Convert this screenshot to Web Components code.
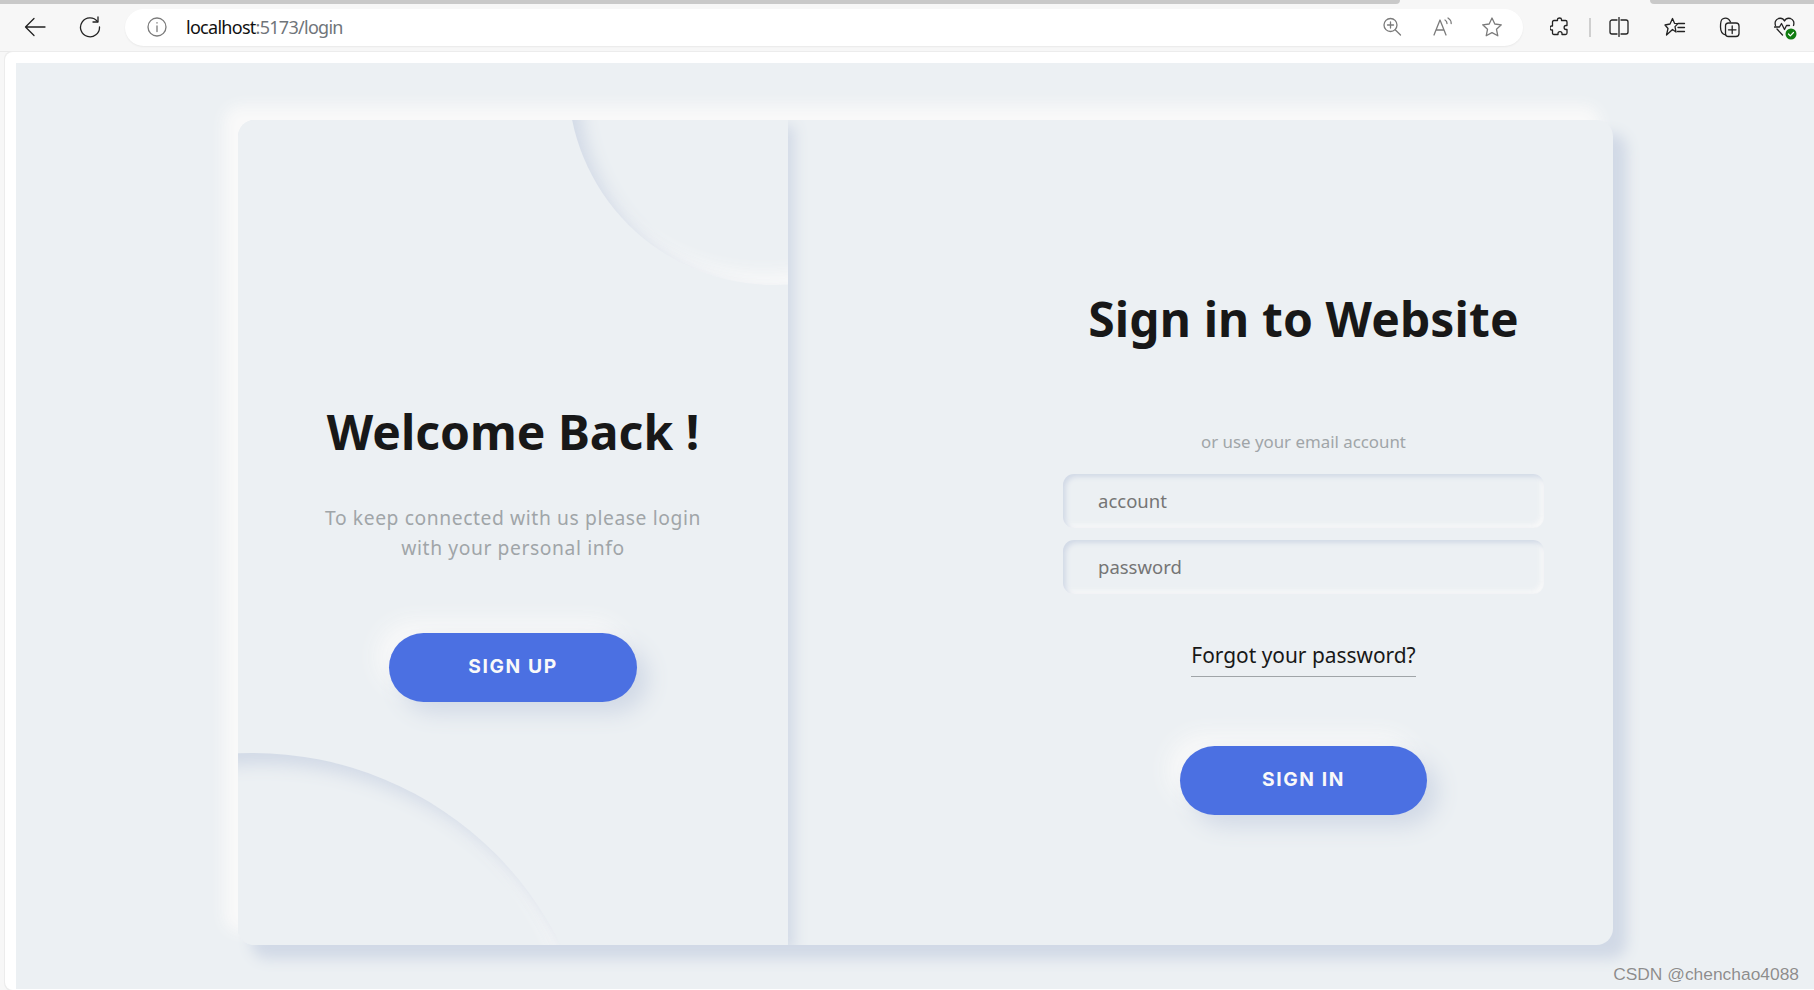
<!DOCTYPE html>
<html>
<head>
<meta charset="utf-8">
<title>login</title>
<style>
  html, body { margin: 0; height: 100%; background: #f7f7f7; overflow: hidden; }
  body { display: flex; flex-direction: column; font-family: "Noto Sans", "Open Sans", sans-serif; }
</style>
</head>
<body>
<browser-bar url-host="localhost" url-rest=":5173/login"></browser-bar>
<page-frame>
  <login-card>
    <welcome-panel slot="left"
      heading="Welcome Back !"
      button="SIGN UP">To keep connected with us please login<br>with your personal info</welcome-panel>
    <sign-form slot="right"></sign-form>
  </login-card>
</page-frame>

<script>
class BrowserBar extends HTMLElement {
  constructor() {
    super()
    const shadow = this.attachShadow({ mode: 'open' })
    shadow.innerHTML = `
    <style>
      :host { display: block; flex: none; background: #f7f7f7; }
      .tabs { display: flex; height: 4px; }
      .tabs i { background: #c9c9c9; }
      .tabs .a { width: 1400px; border-radius: 0 0 6px 0; }
      .tabs .gap { width: 250px; background: #f7f7f7; }
      .tabs .b { flex: 1; border-radius: 0 0 0 6px; }
      .bar { display: flex; align-items: center; height: 48px; box-sizing: border-box; border-bottom: 1px solid #e9e9e9; padding-bottom: 1px; }
      .nav { width: 125px; flex: none; display: flex; align-items: center; }
      .nav svg:first-child { margin-left: 24px; }
      .nav svg:last-child { margin-left: 33px; }
      .pill { flex: none; width: 1398px; height: 37px; background: #fff; border-radius: 19px; display: flex; align-items: center; box-shadow: 0 1px 2px #0000000f; }
      .pill .info { margin-left: 22px; }
      .url { margin-left: 19px; font: 18px/1 "Noto Sans", sans-serif; letter-spacing: -0.72px; color: #111; white-space: nowrap; }
      .url span { color: #70757a; }
      .pill .right { margin-left: auto; display: flex; align-items: center; }
      .pill .right svg { display: block; }
      .tools { display: flex; align-items: center; }
      svg { display: block; fill: none; stroke: #222; stroke-width: 1.3; stroke-linecap: round; stroke-linejoin: round; }
      .grey { stroke: #7b7b7b; }
    </style>
    <div class="tabs"><i class="a"></i><i class="gap"></i><i class="b"></i></div>
    <div class="bar">
      <div class="nav">
        <svg width="22" height="20" viewBox="0 0 22 20"><path d="M1.500 10H21M10 1.500 1.500 10l8.500 8.500"/></svg>
        <svg width="22" height="22" viewBox="0 0 22 22"><path d="M18.500 5.500A9.500 9.500 0 1 0 20.500 11"/><path d="M19 1v5h-5"/></svg>
      </div>
      <div class="pill">
        <svg class="info grey" width="20" height="20" viewBox="0 0 20 20"><circle cx="10" cy="10" r="9"/><path d="M10 9v5.500M10 5.600v.4"/></svg>
        <div class="url" part="url"></div>
        <div class="right">
          <svg class="grey" style="margin-right:31px" width="20" height="20" viewBox="0 0 20 20"><circle cx="8.500" cy="8" r="6.500"/><path d="M13.200 12.700 18.500 18M8.500 5v6M5.500 8h6"/></svg>
          <svg class="grey" style="margin-right:28px" width="20" height="20" viewBox="0 0 20 20"><path d="M1 18 7 3l6 15M3 13h8M12 3c1.500.8 2 2 2 3.500M15 1c2.200 1.300 3.200 3 3.200 5.500"/></svg>
          <svg class="grey" style="margin-right:20px" width="22" height="22" viewBox="0 0 22 22"><path d="m11 2 2.800 6 6.500.8-4.800 4.500 1.300 6.500L11 16.600 5.200 19.800l1.300-6.500L1.700 8.800 8.200 8z"/></svg>
        </div>
      </div>
      <div class="tools">
        <svg style="margin-left:27px" width="20" height="20" viewBox="0 0 20 20"><path d="M7.500 2.500c0-2 4-2 4 0v1h4c1 0 1.500.5 1.500 1.500v3.500h-1c-2.500 0-2.500 4 0 4h1V16c0 1-.5 1.500-1.500 1.500h-3.500v-1c0-2.500-4-2.500-4 0v1H4c-1 0-1.500-.5-1.500-1.500v-3h-1c-2 0-2-4 0-4h1V5c0-1 .5-1.500 1.500-1.500h3.500z"/></svg>
        <i style="width:2px;height:19px;background:#cfcfcf;margin-left:19px"></i>
        <svg style="margin-left:18px" width="20" height="20" viewBox="0 0 20 20"><path d="M10 .5v19M8 3H3C2 3 1 4 1 5v10c0 1 1 2 2 2h5M12 3h5c1 0 2 1 2 2v10c0 1-1 2-2 2h-5"/></svg>
        <svg style="margin-left:35px" width="22" height="20" viewBox="0 0 22 20"><path d="m8.500 1.500 2 4.800 3.500.3-3 3 1 5.400-3.500-2.500L2.500 18 4 11.500 1 8l5-1zM14 6.500h6.500M14 10.500h6.500M13.500 14.500h7"/></svg>
        <svg style="margin-left:33px" width="21" height="21" viewBox="0 0 21 21"><path d="M6.500 18C3 17 1.500 14 1.500 10 1.500 7 1.500 3 3.500 2c3-1.500 6-1 8 3"/><rect x="6.500" y="6" width="13.500" height="13.500" rx="3"/><path d="M13.200 9v7.500M9.500 12.800H17"/></svg>
        <div style="position:relative;margin-left:34px">
          <svg width="21" height="20" viewBox="0 0 21 20"><path d="M10.500 4C9 1 6.500 1 4.500 1.500 1.500 2.500.5 5.500 1.500 8.500M10.500 4c1.500-3 4-3 6-2.500 3 1 4 4 3 7M.5 10h5l2-3.500 3 6 2-4h3M3 12l5.500 6"/></svg>
          <svg style="position:absolute;right:-2px;bottom:-3px;stroke:#fff;stroke-width:1.200" width="12" height="12" viewBox="0 0 12 12"><circle cx="6" cy="6" r="5.500" fill="#107c10" stroke="none"/><path d="m3.500 6 1.800 1.800 3.200-3.300"/></svg>
        </div>
      </div>
    </div>`
    shadow.querySelector('.url').innerHTML = `${this.getAttribute('url-host')}<span>${this.getAttribute('url-rest')}</span>`
  }
}

class PageFrame extends HTMLElement {
  constructor() {
    super()
    const shadow = this.attachShadow({ mode: 'open' })
    shadow.innerHTML = `
    <style>
      :host { display: block; flex: 1; position: relative; background: #fff; border-radius: 8px 0 0 8px; box-shadow: -1px -1px 0 #ececec, -1px 1px 0 #ececec; margin-left: 5px; padding: 11px 0 1px 11px; min-height: 0; }
      .view { height: 100%; box-sizing: border-box; background: #ecf0f3; padding: 57px 0 0 222px; }
      .mark { position: absolute; right: 15px; bottom: 7px; font: 17.400px/1 "Liberation Sans", sans-serif; color: #8d8d8d; text-shadow: 0 0 1px #fff; }
    </style>
    <div class="view"><slot></slot></div>
    <div class="mark">CSDN @chenchao4088</div>`
  }
}

class LoginCard extends HTMLElement {
  constructor() {
    super()
    const shadow = this.attachShadow({ mode: 'open' })
    shadow.innerHTML = `
    <style>
      :host { display: flex; width: 1375px; height: 825px; border-radius: 16.500px; background: #ecf0f3; box-shadow: 13.750px 13.750px 13.750px #d1d9e6, -13.750px -13.750px 13.750px #f9f9f9; }
      .in { display: flex; width: 100%; height: 100%; border-radius: 16.500px; overflow: hidden; }
    </style>
    <div class="in"><slot name="left"></slot><slot name="right"></slot></div>`
  }
}

class WelcomePanel extends HTMLElement {
  constructor() {
    super()
    const shadow = this.attachShadow({ mode: 'open' })
    shadow.innerHTML = `
    <style>
      :host { display: flex; flex: none; width: 550px; height: 825px; box-sizing: border-box; position: relative; z-index: 2; background: #ecf0f3; box-shadow: 5.500px 5.500px 13.750px #d1d9e6; flex-direction: column; align-items: center; padding-top: 280px; }
      .clip { position: absolute; inset: 0; overflow: hidden; }
      .circle { position: absolute; border-radius: 50%; background: #ecf0f3; box-shadow: inset 11px 11px 16.500px #d1d9e6, inset -11px -11px 16.500px #f9f9f9; }
      .b { width: 687.500px; height: 687.500px; left: -330px; top: 632.500px; }
      .t { width: 412.500px; height: 412.500px; left: 330px; top: -247.500px; }
      h2 { position: relative; margin: 0; font: 700 48px/64px "Noto Sans", sans-serif; color: #181818; }
      p { position: relative; margin: 39px 0 0; font: 19.250px/30px "Noto Sans", sans-serif; letter-spacing: .6px; color: #a0a5a8; text-align: center; }
      neu-button { margin-top: 70px; }
    </style>
    <div class="clip"><div class="circle b"></div><div class="circle t"></div></div>
    <h2></h2>
    <p><slot></slot></p>
    <neu-button></neu-button>`
    shadow.querySelector('h2').textContent = this.getAttribute('heading')
    shadow.querySelector('neu-button').textContent = this.getAttribute('button')
  }
}

class SignForm extends HTMLElement {
  constructor() {
    super()
    const shadow = this.attachShadow({ mode: 'open' })
    shadow.innerHTML = `
    <style>
      :host { display: flex; flex: 1; flex-direction: column; align-items: center; box-sizing: border-box; padding: 167px 0 0 206px; }
      h2 { margin: 0; font: 700 48px/64px "Noto Sans", sans-serif; color: #181818; letter-spacing: .1px; }
      .sub { margin-top: 79px; font: 16.850px/24px "Noto Sans", sans-serif; color: #a0a5a8; }
      neu-input { margin-top: 20px; }
      neu-input + neu-input { margin-top: 12px; }
      a { margin-top: 46px; padding-bottom: 6px; border-bottom: 1px solid #a0a5a8; font: 20.900px/30px "Noto Sans", sans-serif; color: #181818; }
      neu-button { margin-top: 69px; }
    </style>
    <h2>Sign in to Website</h2>
    <div class="sub">or use your email account</div>
    <neu-input>account</neu-input>
    <neu-input>password</neu-input>
    <a>Forgot your password?</a>
    <neu-button>SIGN IN</neu-button>`
  }
}

class NeuInput extends HTMLElement {
  constructor() {
    super()
    const shadow = this.attachShadow({ mode: 'open' })
    shadow.innerHTML = `
    <style>
      :host { display: flex; align-items: center; box-sizing: border-box; width: 481px; height: 54px; padding-left: 35px; border-radius: 11px; background: #ecf0f3; box-shadow: inset 2.750px 2.750px 5.500px #d1d9e6, inset -2.750px -2.750px 5.500px #f9f9f9; font: 18.500px/1 "Noto Sans", sans-serif; color: #757575; }
    </style>
    <slot></slot>`
  }
}

class NeuButton extends HTMLElement {
  constructor() {
    super()
    const shadow = this.attachShadow({ mode: 'open' })
    shadow.innerHTML = `
    <style>
      :host { display: flex; align-items: center; justify-content: center; flex: none; box-sizing: border-box; width: 247.500px; height: 69px; padding-bottom: 2px; border-radius: 34.500px; background: #4b70e2; box-shadow: 11px 11px 22px #d1d9e6, -11px -11px 22px #f9f9f9; color: #f9f9f9; font: 700 19.250px/1 Inter, "Liberation Sans", sans-serif; letter-spacing: 1.600px; position: relative; }
    </style>
    <slot></slot>`
  }
}

customElements.define('browser-bar', BrowserBar)
customElements.define('page-frame', PageFrame)
customElements.define('login-card', LoginCard)
customElements.define('welcome-panel', WelcomePanel)
customElements.define('sign-form', SignForm)
customElements.define('neu-input', NeuInput)
customElements.define('neu-button', NeuButton)
</script>
</body>
</html>
